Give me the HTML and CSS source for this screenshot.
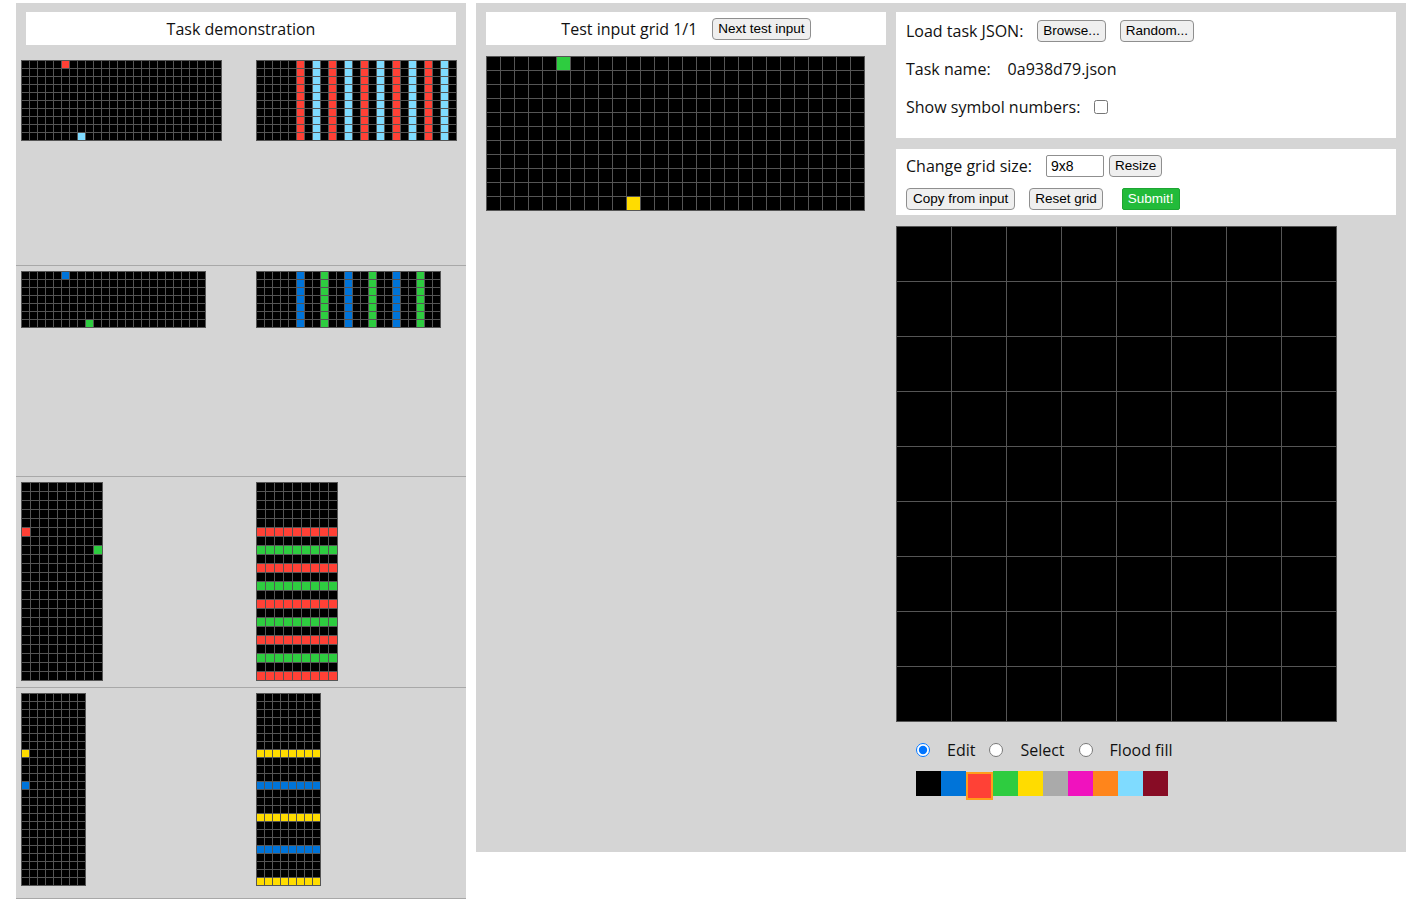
FILE: index.html
```html
<!DOCTYPE html>
<html lang="en">
<head>
<meta charset="utf-8">
<title>ARC testing interface</title>
<link rel="stylesheet" href="styles.css">
</head>
<body>
<div class="app">
  <section class="demo-panel">
    <div class="panel-header">Task demonstration</div>
    <div class="pair">
      <div class="grid" data-grid="p1in"></div>
      <div class="grid" data-grid="p1out"></div>
    </div>
    <div class="pair">
      <div class="grid" data-grid="p2in"></div>
      <div class="grid" data-grid="p2out"></div>
    </div>
    <div class="pair">
      <div class="grid" data-grid="p3in"></div>
      <div class="grid" data-grid="p3out"></div>
    </div>
    <div class="pair">
      <div class="grid" data-grid="p4in"></div>
      <div class="grid" data-grid="p4out"></div>
    </div>
  </section>

  <section class="workspace">
    <div class="test-col">
      <div class="panel-header test-header">
        <span>Test input grid 1/1</span>
        <button class="btn">Next test input</button>
      </div>
      <div class="grid test-grid" data-grid="test"></div>
    </div>

    <div class="edit-col">
      <div class="box info-box">
        <div class="row">
          <span class="label">Load task JSON:</span>
          <button class="btn gap-l">Browse...</button>
          <button class="btn gap-l">Random...</button>
        </div>
        <div class="row">
          <span class="label">Task name:</span>
          <span class="task-name">0a938d79.json</span>
        </div>
        <div class="row">
          <span class="label">Show symbol numbers:</span>
          <input type="checkbox" class="check">
        </div>
      </div>

      <div class="box size-box">
        <div class="row row-a">
          <span class="label">Change grid size:</span>
          <input type="text" class="size-input" value="9x8">
          <button class="btn resize">Resize</button>
        </div>
        <div class="row row-b">
          <button class="btn copy">Copy from input</button>
          <button class="btn gap-l">Reset grid</button>
          <button class="btn submit">Submit!</button>
        </div>
      </div>

      <div class="grid output-grid" data-grid="output"></div>

      <div class="tools">
        <input type="radio" name="tool" id="tool_edit" class="radio first" checked>
        <label for="tool_edit">Edit</label>
        <input type="radio" name="tool" id="tool_select" class="radio">
        <label for="tool_select">Select</label>
        <input type="radio" name="tool" id="tool_fill" class="radio">
        <label for="tool_fill">Flood fill</label>
      </div>

      <div class="palette">
        <div class="swatch c0"></div>
        <div class="swatch c1"></div>
        <div class="swatch c2 selected"></div>
        <div class="swatch c3"></div>
        <div class="swatch c4"></div>
        <div class="swatch c5"></div>
        <div class="swatch c6"></div>
        <div class="swatch c7"></div>
        <div class="swatch c8"></div>
        <div class="swatch c9"></div>
      </div>
    </div>
  </section>
</div>
<script src="script.js"></script>
</body>
</html>
```

FILE: styles.css
```css
html, body {
  margin: 0;
  background: #ffffff;
}

body {
  padding: 3px 0 0 16px;
  font-family: "Open Sans", "Noto Sans", sans-serif;
  font-size: 16px;
  color: #111;
}

.app {
  display: flex;
  align-items: flex-start;
  gap: 10px;
}

/* left panel */
.demo-panel {
  width: 450px;
  background: #d5d5d5;
  padding-top: 9px;
}

.panel-header {
  background: #ffffff;
  height: 33px;
  display: flex;
  align-items: center;
  justify-content: center;
  font-size: 16px;
}

.demo-panel .panel-header {
  margin: 0 10px 10px;
}

.pair {
  box-sizing: border-box;
  height: 211px;
  padding: 5px 0 0 5px;
  border-bottom: 1px solid #a8a8a8;
  display: grid;
  grid-template-columns: 235px auto;
  align-items: start;
  justify-items: start;
}

/* grids */
.grid {
  display: grid;
  grid-template-columns: repeat(var(--cols), var(--cell));
  grid-auto-rows: var(--cell);
  border-top: 1px solid #555;
  border-left: 1px solid #555;
  width: max-content;
}

.cell {
  box-sizing: border-box;
  border-right: 1px solid #555;
  border-bottom: 1px solid #555;
}

.c0 { background: #000000; }
.c1 { background: #0074d9; }
.c2 { background: #ff4136; }
.c3 { background: #2ecc40; }
.c4 { background: #ffdc00; }
.c5 { background: #aaaaaa; }
.c6 { background: #f012be; }
.c7 { background: #ff851b; }
.c8 { background: #7fdbff; }
.c9 { background: #870c25; }

/* workspace */
.workspace {
  box-sizing: border-box;
  width: 930px;
  height: 849px;
  background: #d5d5d5;
  padding: 9px 10px 0;
  display: flex;
  gap: 10px;
}

.test-col {
  width: 400px;
}

.test-header {
  gap: 15px;
}

.test-grid {
  margin-top: 11px;
}

.edit-col {
  width: 500px;
  display: flex;
  flex-direction: column;
}

.box {
  background: #ffffff;
  box-sizing: border-box;
  padding: 0 10px;
}

.info-box {
  height: 126px;
}

.info-box .row {
  height: 38px;
}

.info-box .row:first-child {
  height: 37px;
  margin-bottom: 1px;
}

.row {
  display: flex;
  align-items: center;
}

.size-box {
  margin-top: 11px;
  height: 66px;
}

.row-a { height: 34px; }
.row-b { height: 32px; }

.task-name {
  margin-left: 17px;
}

.btn {
  font-family: "Liberation Sans", Arial, sans-serif;
  font-size: 13.5px;
  color: #000;
  background: #efefef;
  border: 1px solid #8f8f8f;
  border-radius: 4px;
  height: 22px;
  padding: 0 5px;
  margin: 0;
  line-height: 20px;
}

.btn.copy {
  padding: 0 6px;
}

.gap-l {
  margin-left: 14px;
}

.check {
  margin: 0 0 0 14px;
  width: 14px;
  height: 14px;
}

.size-input {
  box-sizing: border-box;
  margin-left: 14px;
  width: 58px;
  height: 22px;
  border: 1px solid #8f8f8f;
  border-radius: 2px;
  padding: 0 4px;
  font-family: "Liberation Sans", Arial, sans-serif;
  font-size: 14px;
}

.resize {
  margin-left: 5px;
}

.submit {
  margin-left: 19px;
  background: #22bb3a;
  border-color: #1ea533;
  color: #ffffff;
  border-radius: 2px;
}

.output-grid {
  margin-top: 11px;
}

.tools {
  margin-top: 17px;
  height: 22px;
  display: flex;
  align-items: center;
  padding-left: 20px;
}

.radio {
  margin: 0 0 0 14px;
  width: 14px;
  height: 14px;
}

.radio.first {
  margin-left: 0;
}

.tools label {
  margin-left: 17px;
}

.palette {
  margin-top: 10px;
  padding-left: 20px;
  display: flex;
  align-items: flex-start;
}

.swatch {
  width: 25px;
  height: 25px;
}

.swatch.selected {
  box-sizing: border-box;
  width: 27px;
  height: 28px;
  margin-top: 1px;
  border: 2px solid #ff9d1b;
}
```

FILE: script.js
```js
var GRIDS = {
  p1in:  { r: 10, c: 25, s: 8, f: function (r, c) { if (r === 0 && c === 5) return 2; if (r === 9 && c === 7) return 8; return 0; } },
  p1out: { r: 10, c: 25, s: 8, f: function (r, c) { if (c >= 5 && (c - 5) % 2 === 0) return ((c - 5) / 2) % 2 === 0 ? 2 : 8; return 0; } },
  p2in:  { r: 7, c: 23, s: 8, f: function (r, c) { if (r === 0 && c === 5) return 1; if (r === 6 && c === 8) return 3; return 0; } },
  p2out: { r: 7, c: 23, s: 8, f: function (r, c) { if (c >= 5 && (c - 5) % 3 === 0) return ((c - 5) / 3) % 2 === 0 ? 1 : 3; return 0; } },
  p3in:  { r: 22, c: 9, s: 9, f: function (r, c) { if (r === 5 && c === 0) return 2; if (r === 7 && c === 8) return 3; return 0; } },
  p3out: { r: 22, c: 9, s: 9, f: function (r, c) { if (r >= 5 && (r - 5) % 2 === 0) return ((r - 5) / 2) % 2 === 0 ? 2 : 3; return 0; } },
  p4in:  { r: 24, c: 8, s: 8, f: function (r, c) { if (r === 7 && c === 0) return 4; if (r === 11 && c === 0) return 1; return 0; } },
  p4out: { r: 24, c: 8, s: 8, f: function (r, c) { if (r >= 7 && (r - 7) % 4 === 0) return ((r - 7) / 4) % 2 === 0 ? 4 : 1; return 0; } },
  test:  { r: 11, c: 27, s: 14, f: function (r, c) { if (r === 0 && c === 5) return 3; if (r === 10 && c === 10) return 4; return 0; } },
  output:{ r: 9, c: 8, s: 55, f: function () { return 0; } }
};

document.querySelectorAll('[data-grid]').forEach(function (el) {
  var g = GRIDS[el.getAttribute('data-grid')];
  if (!g) return;
  el.style.setProperty('--cols', g.c);
  el.style.setProperty('--cell', g.s + 'px');
  var frag = document.createDocumentFragment();
  for (var r = 0; r < g.r; r++) {
    for (var c = 0; c < g.c; c++) {
      var d = document.createElement('div');
      d.className = 'cell c' + g.f(r, c);
      frag.appendChild(d);
    }
  }
  el.appendChild(frag);
});
```
